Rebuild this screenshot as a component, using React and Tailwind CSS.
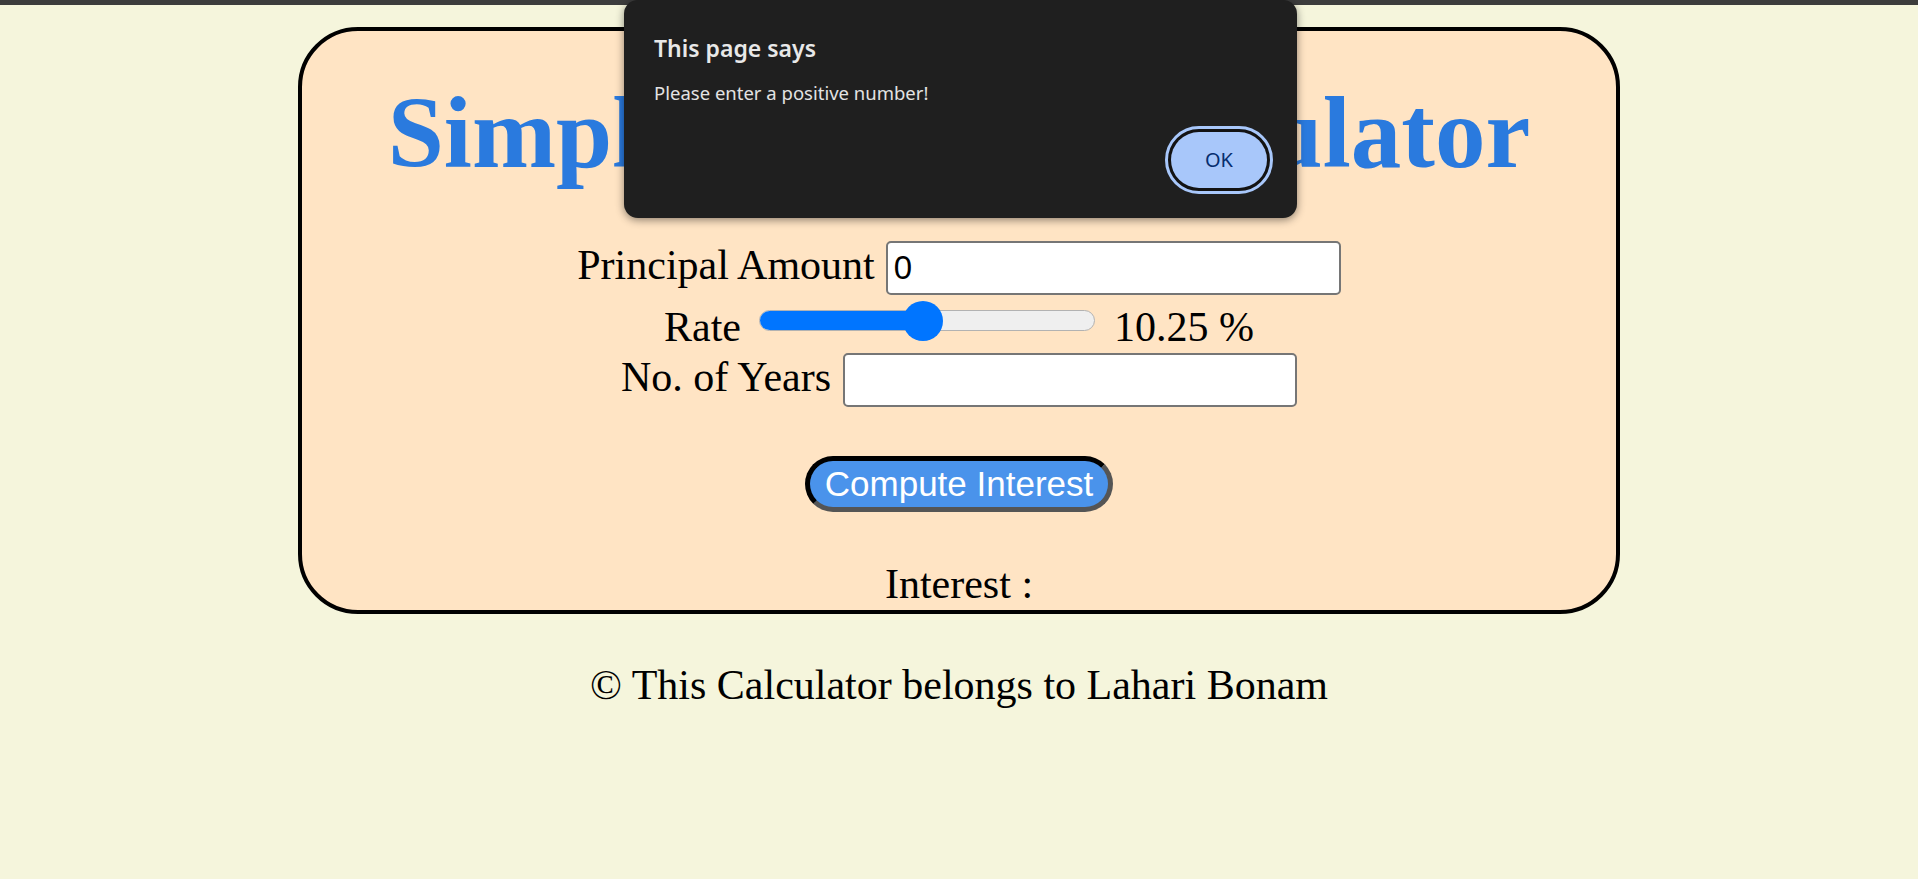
import { useState } from 'react'

const RateSlider = ({ value, min, max }) => {
	// track is 336px wide, thumb is 40px, so the thumb travels 296px
	const thumbLeft = ((value - min) / (max - min)) * 296

	return (
		<div className="relative flex h-[41px] w-[336px] items-center">
			<div className="h-[21px] w-full overflow-hidden rounded-full border-[1.5px] border-[#b2b2b2] bg-[#efefef]">
				<div className="h-full bg-[#0075ff]" style={{ width: thumbLeft + 20 }} />
			</div>
			<div
				className="absolute top-1/2 h-[40px] w-[40px] -translate-y-1/2 rounded-full bg-[#0075ff]"
				style={{ left: thumbLeft }}
			/>
		</div>
	)
}

const AlertDialog = () => {
	return (
		<div className="absolute left-[624px] top-0 h-[218px] w-[673px] rounded-[14px] bg-[#1f1f1f] pl-[30px] pr-[24px] pt-[33px] font-['Noto_Sans','Open_Sans',sans-serif] shadow-[0_2px_8px_rgba(0,0,0,0.45)]">
			<p className="text-[23px] font-semibold leading-[30px] text-[#e8e8e8]">This page says</p>
			<p className="mt-[17px] text-[18.5px] leading-[26px] text-[#e3e3e3]">Please enter a positive number!</p>
			<div className="mt-[20px] flex justify-end">
				<div className="rounded-full border-[3px] border-[#a8c7fa] bg-[#131313] p-[3px]">
					<div className="flex h-[56px] w-[96px] items-center justify-center rounded-full bg-[#a8c7fa] text-[20px] text-[#062e6f]">
						OK
					</div>
				</div>
			</div>
		</div>
	)
}

export default function App() {
	const [principal, setPrincipal] = useState('0')
	const [years, setYears] = useState('')
	const rate = 10.25

	return (
		<div className="relative min-h-screen bg-[#f5f5dc] font-['Liberation_Serif','Times_New_Roman',serif] text-black">
			<div className="h-[5px] bg-[#3c3c3c]" />

			<div className="mx-auto mt-[22px] flex w-[1322px] flex-col items-center rounded-[60px] border-4 border-black bg-[#ffe4c4] pb-[5px] pt-[45px]">
				<h1 className="text-[101px] font-bold leading-[115px] text-[#2a7ade]">Simple Interest Calculator</h1>

				<div className="mt-[50px] flex items-baseline justify-center">
					<label className="text-[42px] leading-[42px]">Principal Amount</label>
					<input
						className="ml-[11px] h-[54px] w-[455px] rounded-[5px] border-[2.5px] border-[#767676] bg-white px-[6px] font-['Liberation_Sans',Arial,sans-serif] text-[33px] text-black outline-none"
						value={principal}
						onChange={(e) => setPrincipal(e.target.value)}
					/>
				</div>

				<div className="mt-[5px] flex items-start justify-center">
					<span className="mt-[6px] text-[42px] leading-[42px]">Rate</span>
					<div className="ml-[18px]">
						<RateSlider value={rate} min={1} max={20} />
					</div>
					<span className="ml-[19px] mt-[6px] text-[42px] leading-[42px]">{rate} %</span>
				</div>

				<div className="mt-[5px] flex items-baseline justify-center">
					<label className="text-[42px] leading-[42px]">No. of Years</label>
					<input
						className="ml-[12px] h-[54px] w-[454px] rounded-[5px] border-[2.5px] border-[#767676] bg-white px-[6px] font-['Liberation_Sans',Arial,sans-serif] text-[33px] text-black outline-none"
						value={years}
						onChange={(e) => setYears(e.target.value)}
					/>
				</div>

				<button className="mt-[49px] rounded-full border-[5px] border-b-[#555] border-l-black border-r-[#555] border-t-black bg-[#4a93eb] px-[15px] py-[3px] font-['Liberation_Sans',Arial,sans-serif] text-[35px] leading-[40px] text-white">
					Compute Interest
				</button>

				<p className="mt-[51px] text-[42px] leading-[42px]">Interest :</p>
			</div>

			<p className="mt-[50px] text-center text-[42px] leading-[42px]">© This Calculator belongs to Lahari Bonam</p>

			<AlertDialog />
		</div>
	)
}
